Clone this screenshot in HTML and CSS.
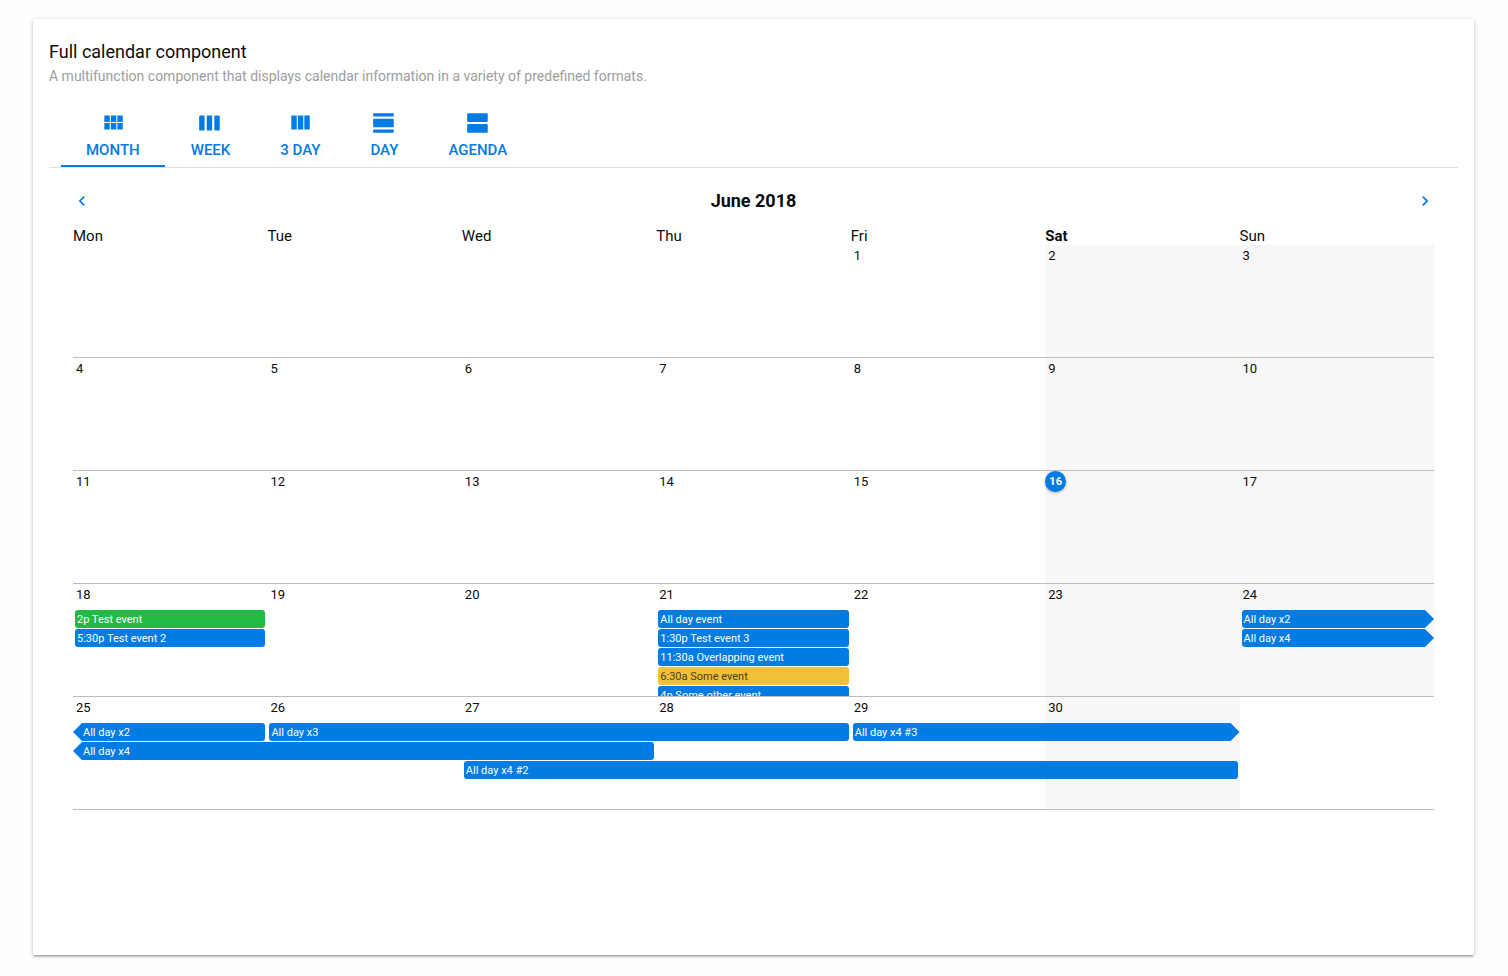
FILE: index.html
```
<!DOCTYPE html>
<html lang="en">
<head>
<meta charset="utf-8">
<title>Full calendar component</title>
<link rel="stylesheet" href="styles.css">
</head>
<body>
<main class="card">
  <header class="card-head">
    <h1 class="title">Full calendar component</h1>
    <p class="subtitle">A multifunction component that displays calendar information in a variety of predefined formats.</p>
  </header>

  <div class="tabs" role="tablist">
    <button class="tab active" type="button" role="tab" aria-selected="true">
      <svg class="icon" viewBox="0 0 24 24"><path d="M4 11h5V5H4v6zm0 7h5v-6H4v6zm6 0h5v-6h-5v6zm6 0h5v-6h-5v6zm-6-7h5V5h-5v6zm6-6v6h5V5h-5z"/></svg>
      <span>MONTH</span>
    </button>
    <button class="tab" type="button" role="tab">
      <svg class="icon" viewBox="0 0 24 24"><path d="M6 5H3c-.55 0-1 .45-1 1v12c0 .55.45 1 1 1h3c.55 0 1-.45 1-1V6c0-.55-.45-1-1-1zm14 0h-3c-.55 0-1 .45-1 1v12c0 .55.45 1 1 1h3c.55 0 1-.45 1-1V6c0-.55-.45-1-1-1zm-7 0h-3c-.55 0-1 .45-1 1v12c0 .55.45 1 1 1h3c.55 0 1-.45 1-1V6c0-.55-.45-1-1-1z"/></svg>
      <span>WEEK</span>
    </button>
    <button class="tab" type="button" role="tab">
      <svg class="icon" viewBox="0 0 24 24"><path d="M10 18h5V5h-5v13zm-6 0h5V5H4v13zM16 5v13h5V5h-5z"/></svg>
      <span>3 DAY</span>
    </button>
    <button class="tab" type="button" role="tab">
      <svg class="icon" viewBox="0 0 24 24"><path d="M2 21h19v-3H2v3zM20 8H3c-.55 0-1 .45-1 1v6c0 .55.45 1 1 1h17c.55 0 1-.45 1-1V9c0-.55-.45-1-1-1zM2 3v3h19V3H2z"/></svg>
      <span>DAY</span>
    </button>
    <button class="tab" type="button" role="tab">
      <svg class="icon" viewBox="0 0 24 24"><path d="M20 13H3c-.55 0-1 .45-1 1v6c0 .55.45 1 1 1h17c.55 0 1-.45 1-1v-6c0-.55-.45-1-1-1zm0-10H3c-.55 0-1 .45-1 1v6c0 .55.45 1 1 1h17c.55 0 1-.45 1-1V4c0-.55-.45-1-1-1z"/></svg>
      <span>AGENDA</span>
    </button>
  </div>

  <section class="calendar">
    <div class="nav">
      <button class="nav-button" type="button" aria-label="Previous month"><svg class="chevron" viewBox="0 0 24 24"><path d="M15.41 7.41L14 6l-6 6 6 6 1.41-1.41L10.83 12z"/></svg></button>
      <h2 class="month">June 2018</h2>
      <button class="nav-button" type="button" aria-label="Next month"><svg class="chevron" viewBox="0 0 24 24"><path d="M10 6L8.59 7.41 13.17 12l-4.58 4.59L10 18l6-6z"/></svg></button>
    </div>

    <div class="weekdays">
      <div>Mon</div><div>Tue</div><div>Wed</div><div>Thu</div><div>Fri</div><div class="current">Sat</div><div>Sun</div>
    </div>

    <div class="week">
      <div class="day c5">1</div><div class="day weekend c6">2</div><div class="day weekend c7">3</div>
    </div>
    <div class="week">
      <div class="day c1">4</div><div class="day c2">5</div><div class="day c3">6</div><div class="day c4">7</div><div class="day c5">8</div><div class="day weekend c6">9</div><div class="day weekend c7">10</div>
    </div>
    <div class="week">
      <div class="day c1">11</div><div class="day c2">12</div><div class="day c3">13</div><div class="day c4">14</div><div class="day c5">15</div><div class="day weekend today c6"><span class="badge">16</span></div><div class="day weekend c7">17</div>
    </div>
    <div class="week">
      <div class="day c1">18</div><div class="day c2">19</div><div class="day c3">20</div><div class="day c4">21</div><div class="day c5">22</div><div class="day weekend c6">23</div><div class="day weekend c7">24</div>
      <div class="event green c1 r1">2p Test event</div>
      <div class="event c1 r2">5:30p Test event 2</div>
      <div class="event c4 r1">All day event</div>
      <div class="event c4 r2">1:30p Test event 3</div>
      <div class="event c4 r3">11:30a Overlapping event</div>
      <div class="event yellow c4 r4">6:30a Some event</div>
      <div class="event c4 r5">4p Some other event</div>
      <div class="event to-next c7 r1">All day x2</div>
      <div class="event to-next c7 r2">All day x4</div>
    </div>
    <div class="week">
      <div class="day c1">25</div><div class="day c2">26</div><div class="day c3">27</div><div class="day c4">28</div><div class="day c5">29</div><div class="day weekend c6">30</div>
      <div class="event from-prev c1 r1">All day x2</div>
      <div class="event c2 span3 r1">All day x3</div>
      <div class="event to-next c5 span2 r1">All day x4 #3</div>
      <div class="event from-prev c1 span3 r2">All day x4</div>
      <div class="event c3 span4 r3">All day x4 #2</div>
    </div>
  </section>
</main>
</body>
</html>
```
FILE: styles.css
```
* { box-sizing: border-box; }

body {
  margin: 0;
  min-height: 100vh;
  display: flex;
  padding: 19px 34px 21px 33px;
  background: #fefefe;
  color: #0c0c0c;
  font-family: Roboto, "Liberation Sans", sans-serif;
}

button {
  border: 0;
  padding: 0;
  background: none;
  color: #027be3;
  font-family: inherit;
  cursor: pointer;
}

.card {
  flex: 1;
  min-width: 0;
  padding: 16px;
  border-radius: 2px;
  background: #fff;
  box-shadow: 0 1px 5px rgba(0, 0, 0, .2), 0 2px 2px rgba(0, 0, 0, .14), 0 3px 1px -2px rgba(0, 0, 0, .12);
}

.title {
  margin: 0;
  font-size: 18px;
  font-weight: 400;
  line-height: 34px;
}

.subtitle {
  margin: 0;
  color: #9e9e9e;
  font-size: 14px;
  line-height: 14px;
}

.tabs {
  display: flex;
  margin-top: 26px;
  padding: 0 12px;
  border-bottom: 1px solid #e0e0e0;
}

.tab {
  display: flex;
  flex-direction: column;
  align-items: center;
  justify-content: flex-end;
  gap: 4px;
  height: 58px;
  padding: 0 25px 5px;
  border-bottom: 2px solid transparent;
  font-size: 15px;
  font-weight: 500;
  line-height: 20px;
}

.tab.active {
  margin-right: 1px;
  border-color: #027be3;
}

.icon {
  width: 26px;
  height: 26px;
  fill: currentColor;
}

.calendar { padding: 18px 24px; }

.nav {
  display: flex;
  align-items: center;
  justify-content: space-between;
}

.nav-button {
  display: flex;
  width: 18px;
  height: 30px;
  align-items: center;
  justify-content: center;
}

.chevron {
  flex: none;
  width: 20px;
  height: 20px;
  fill: currentColor;
}

.month {
  margin: 0;
  font-size: 18px;
  font-weight: 700;
  line-height: 30px;
}

.weekdays {
  display: grid;
  grid-template-columns: repeat(7, 1fr);
  margin-top: 11px;
  font-size: 15px;
  line-height: 18px;
}

.current { font-weight: 700; }

.week {
  display: grid;
  grid-template-columns: repeat(7, 1fr);
  grid-template-rows: 25px repeat(5, 18px);
  row-gap: 1px;
  height: 113px;
  overflow: hidden;
  border-bottom: 1px solid #bdbdbd;
}

.day {
  grid-row: 1 / -1;
  padding-left: 3px;
  font-size: 13px;
  line-height: 22px;
}

.weekend { background: #f7f7f7; }

.today { padding-left: 0; }

.badge {
  display: block;
  width: 21px;
  height: 21px;
  border-radius: 50%;
  background: #027be3;
  box-shadow: 0 1px 3px rgba(0, 0, 0, .3);
  color: #fff;
  font-size: 11px;
  font-weight: 700;
  line-height: 21px;
  text-align: center;
}

.event {
  margin: 0 2px;
  padding: 1px 2px 0;
  overflow: hidden;
  border-radius: 3px;
  background: #027be3;
  color: #fff;
  font-size: 11px;
  line-height: 18px;
  white-space: nowrap;
}

.green { background: #21ba45; }
.yellow { background: #f2c037; color: #4a3c1c; }

.to-next {
  margin-right: 0;
  clip-path: polygon(0 0, calc(100% - 9px) 0, 100% 50%, calc(100% - 9px) 100%, 0 100%);
}

.from-prev {
  margin-left: 0;
  padding-left: 10px;
  clip-path: polygon(9px 0, 100% 0, 100% 100%, 9px 100%, 0 50%);
}

.c1 { grid-column-start: 1; }
.c2 { grid-column-start: 2; }
.c3 { grid-column-start: 3; }
.c4 { grid-column-start: 4; }
.c5 { grid-column-start: 5; }
.c6 { grid-column-start: 6; }
.c7 { grid-column-start: 7; }

.span2 { grid-column-end: span 2; }
.span3 { grid-column-end: span 3; }
.span4 { grid-column-end: span 4; }

.r1 { grid-row: 2; }
.r2 { grid-row: 3; }
.r3 { grid-row: 4; }
.r4 { grid-row: 5; }
.r5 { grid-row: 6; }
```
